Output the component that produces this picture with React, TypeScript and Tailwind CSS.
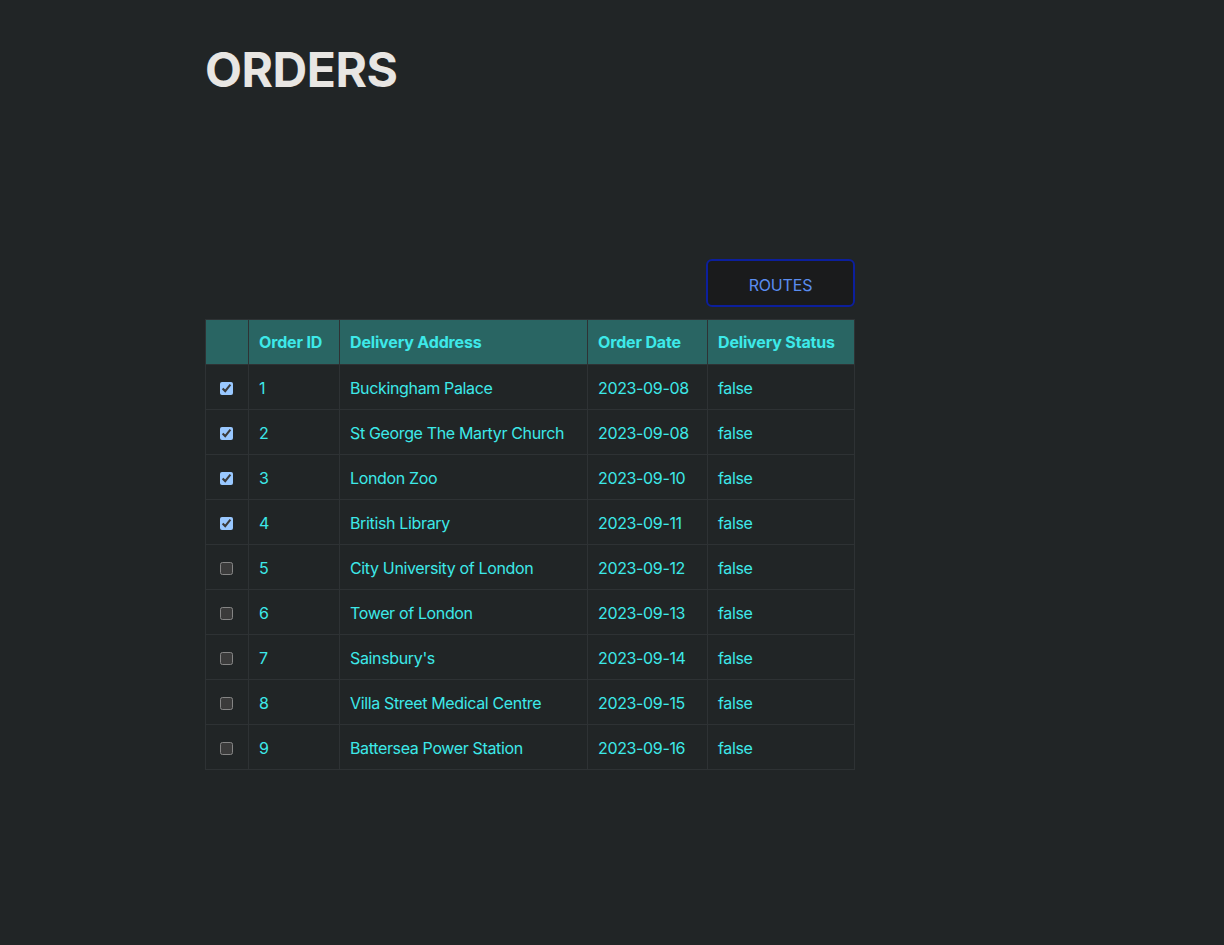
import React from "react"

const orders = [
  { id: 1, address: "Buckingham Palace", date: "2023-09-08", checked: true },
  { id: 2, address: "St George The Martyr Church", date: "2023-09-08", checked: true },
  { id: 3, address: "London Zoo", date: "2023-09-10", checked: true },
  { id: 4, address: "British Library", date: "2023-09-11", checked: true },
  { id: 5, address: "City University of London", date: "2023-09-12", checked: false },
  { id: 6, address: "Tower of London", date: "2023-09-13", checked: false },
  { id: 7, address: "Sainsbury's", date: "2023-09-14", checked: false },
  { id: 8, address: "Villa Street Medical Centre", date: "2023-09-15", checked: false },
  { id: 9, address: "Battersea Power Station", date: "2023-09-16", checked: false },
]

const App = () => {
  return (
    <div className="min-h-[945px] bg-[#212526] font-['Inter',sans-serif] [color-scheme:dark]">
      <div className="pl-[205px] pt-[38px]">
        <h1 className="text-[48px] leading-[64px] font-bold tracking-[-0.01em] text-[#e8e6e3]">
          ORDERS
        </h1>

        <div className="w-[650px] mt-[157px]">
          {/* routes button */}
          <div className="flex justify-end">
            <button className="w-[149px] h-[48px] rounded-md border-2 border-[#0c1f9c] bg-[#1a1b1c] text-[#5b8def] text-base pt-[4px] tracking-[-0.01em]">
              ROUTES
            </button>
          </div>

          {/* orders table */}
          <table className="mt-[12px] w-[650px] border-collapse text-base text-[#3de9e9] tracking-[-0.022em]">
            <thead>
              <tr className="bg-[#296563] h-[45px] text-left tracking-[-0.01em]">
                <th className="w-[43px] border border-[#2e3234]"></th>
                <th className="w-[91px] px-[10px] font-bold border border-[#2e3234]">Order ID</th>
                <th className="w-[248px] px-[10px] font-bold border border-[#2e3234]">Delivery Address</th>
                <th className="w-[120px] px-[10px] font-bold border border-[#2e3234]">Order Date</th>
                <th className="px-[10px] font-bold border border-[#2e3234]">Delivery Status</th>
              </tr>
            </thead>
            <tbody>
              {orders.map((o) => (
                <tr key={o.id} className="h-[45px]">
                  <td className="border border-[#2e3234] text-center pr-[1px]">
                    <input type="checkbox" defaultChecked={o.checked} className="align-middle" />
                  </td>
                  <td className="px-[10px] pt-[2px] border border-[#2e3234]">{o.id}</td>
                  <td className="px-[10px] pt-[2px] border border-[#2e3234]">{o.address}</td>
                  <td className="px-[10px] pt-[2px] border border-[#2e3234]">{o.date}</td>
                  <td className="px-[10px] pt-[2px] border border-[#2e3234]">false</td>
                </tr>
              ))}
            </tbody>
          </table>
        </div>
      </div>
    </div>
  )
}

export default App
